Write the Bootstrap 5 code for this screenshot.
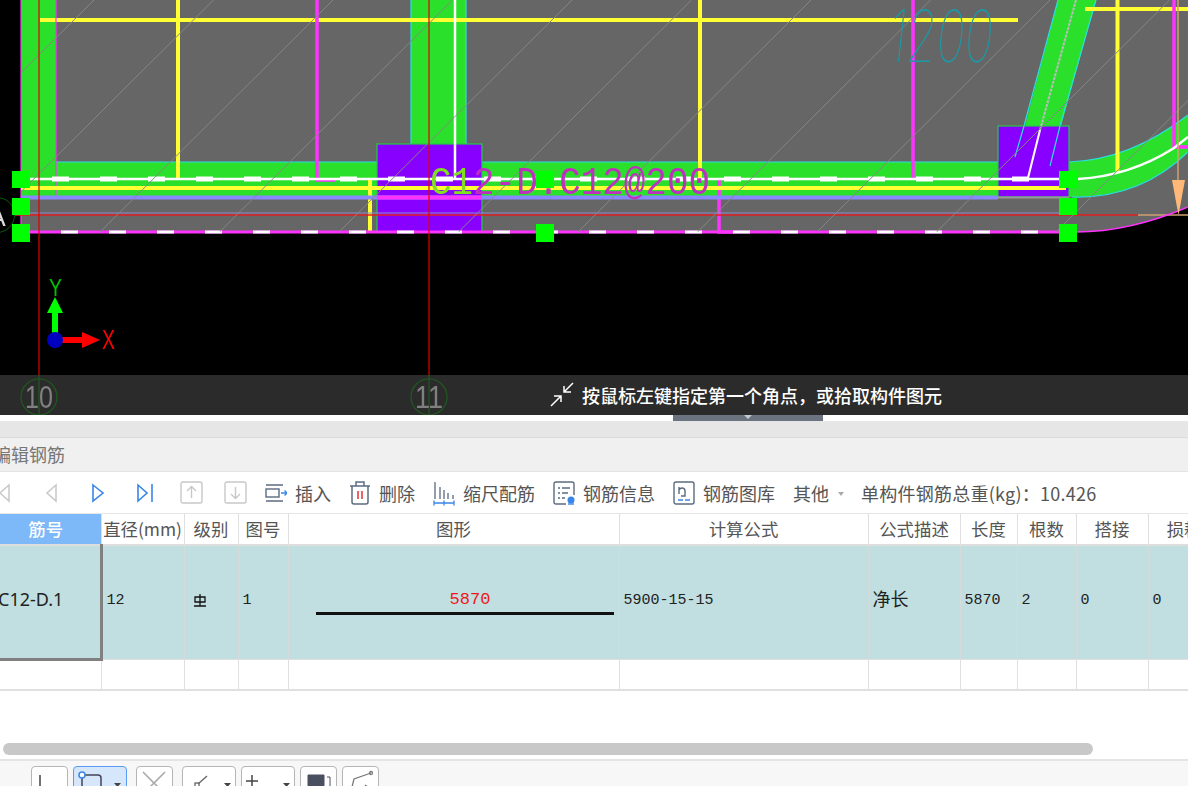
<!DOCTYPE html>
<html lang="zh">
  <head>
    <meta charset="UTF-8" />
    <title>编辑钢筋</title>
    <link href="https://cdn.jsdelivr.net/npm/bootstrap@5.3.0/dist/css/bootstrap.min.css" rel="stylesheet" />
    <style>
      html, body { height: 786px; overflow: hidden; background: #fff; }
      body { font-family: "Noto Sans CJK SC", sans-serif; color: #444; width: 1188px; }

      .cad-view { height: 415px; background: #000; position: relative; overflow: hidden; }
      .cad-view svg { display: block; }
      .cad-draw { filter: blur(0.35px); }
      .cad-hint { position: absolute; left: 550px; top: 375px; height: 40px; color: #fff; font-size: 18px; font-weight: 500; white-space: nowrap; }
      .thin-label { font-family: Inter, "Liberation Sans", sans-serif; font-weight: 100; }

      .split-band { height: 6px; background: #fff; }
      .split-handle { width: 150px; height: 6px; margin-left: 673px; background: #6b7380; }
      .split-caret { width: 0; height: 0; border-left: 4px solid transparent; border-right: 4px solid transparent; border-top: 4px solid #c5c9d0; }
      .gray-band { height: 17px; background: #e6e6e6; border-bottom: 1px solid #dcdcdc; }
      .title-band { height: 34px; background: #f0f0f0; border-bottom: 1px solid #e4e4e4; font-size: 18px; color: #777; white-space: nowrap; }
      .title-band span { margin-left: -7px; }

      .tool-row { height: 42px; margin-left: -20px; font-size: 18px; color: #555; white-space: nowrap; border-bottom: 1px solid #e6e6e6; }
      .nav-cell { width: 47px; }
      .nav-cell-down { width: 41px; }
      .tool-list { gap: 18px; margin-left: 9px; padding-top: 2px; }
      .tool-icon { width: 22px; height: 26px; margin-top: -2px; }
      .tool-caret { width: 0; height: 0; margin-left: 9px; margin-right: -1px; border-left: 3.5px solid transparent; border-right: 3.5px solid transparent; border-top: 4px solid #aaa; }
      .tool-total { letter-spacing: 0.25px; }

      .grid-wrap { height: 229px; overflow: hidden; }
      .rebar-grid { table-layout: fixed; width: 1257px; margin-left: -9px; border-collapse: collapse; }
      .rebar-grid th, .rebar-grid td { padding: 0; border-right: 1px solid #e0e0e0; border-bottom: 1px solid #e0e0e0; }
      .rebar-grid th { height: 31px; font-size: 17.4px; font-weight: 400; text-align: center; color: #555; white-space: nowrap; border-bottom: 2px solid #dedede; }
      .rebar-grid th.head-active { background: #7db8f8; color: #fff; font-weight: 500; }
      .rebar-grid .row-main td { height: 114px; background: #c1dfe0; font-family: "Liberation Mono", "Noto Sans CJK SC", monospace; font-size: 15px; color: #222; padding-left: 4px; padding-bottom: 2px; border-right-color: #d6dcdc; }
      .rebar-grid .row-main td.cell-active { border-right: 3px solid #808080; border-bottom: 3px solid #808080; padding-left: 7px; padding-bottom: 4px; font-family: "Noto Sans", "Noto Sans CJK SC", sans-serif; font-size: 18px; }
      .rebar-grid .row-main td.cell-cn { font-family: "Noto Sans CJK SC", sans-serif; font-size: 18px; padding-bottom: 7px; }
      .rebar-grid .row-empty td { height: 31px; border-bottom: 2px solid #e0e0e0; }
      .shape-num { color: #f01818; font-size: 17px; line-height: 22px; padding-left: 33px; }
      .shape-bar { height: 3px; width: 298px; background: #111; margin-left: 27px; margin-top: 1px; }
      .shape-cell { padding-bottom: 0 !important; }

      .scroll-track { height: 16px; padding-left: 3px; }
      .scroll-thumb { width: 1090px; height: 12px; background: #c8c8c8; border-radius: 6px; }
      .foot-bar { height: 27px; background: #f7f7f7; border-top: 2px solid #e4e4e4; padding-left: 31px; overflow: hidden; gap: 5px; }
      .foot-btn { width: 37px; height: 40px; margin-top: 5px; border: 1.5px solid #b5b5b5; border-radius: 4px; background: #fff; position: relative; flex: none; }
      .foot-btn svg { display: block; }
      .foot-wide { width: 54px; }
      .foot-on { background: #d6e6fb; border-color: #5a9cf5; width: 54px; }
      .foot-gap { margin-left: 4px; }
    </style>
  </head>
  <body>
    <div class="cad-view">
      <svg class="cad-draw" width="1188" height="415" viewBox="0 0 1188 415">
        <path d="M21 0H1188V207Q1130 232 1076 232H21Z" fill="#666" />

        <!-- green beams -->
        <g fill="#2be02b">
          <rect x="21" y="0" width="35" height="197" />
          <rect x="21" y="162" width="1050" height="35" />
          <rect x="411" y="0" width="55" height="165" />
          <path d="M1024 130 1058 0H1096L1060 130Z" />
          <path d="M1069 162Q1130 160 1188 115V152Q1140 199 1069 197Z" />
        </g>
        <g fill="none" stroke="#28e0e0" stroke-width="1.2">
          <path d="M56 162H377M482 162H998M411 0V144M466 0V144" />
          <path d="M1058 0 1024 126M1096 0 1060 126" />
          <path d="M1069 162Q1130 160 1188 115M1072 197Q1140 199 1188 152" />
        </g>

        <!-- yellow -->
        <g stroke="#ffff33" fill="none">
          <path d="M40 20H1018M1085 9H1188" stroke-width="4" />
          <path d="M178 0V178M700 0V178M1117.5 0V172" stroke-width="4" />
        </g>

        <!-- magenta -->
        <g stroke="#ff33ff" fill="none">
          <path d="M21 0V232M56 0V197" stroke-width="1.2" />
          <path d="M317 0V180H335M913 0V178M719 178V232H733M1174 0V147H1188" stroke-width="3.5" />
        </g>

        <!-- columns -->
        <g fill="#8800ff" stroke="#22cc44" stroke-width="1.2">
          <rect x="377" y="144" width="105" height="88" />
          <rect x="998" y="126" width="71" height="71" />
        </g>
        <path d="M1024 126 1015 157M1060 126 1050 166" stroke="#28e0e0" stroke-width="1.2" fill="none" />

        <!-- long bars -->
        <path d="M455 0V180" stroke="#fff" stroke-width="2.5" />
        <path d="M1076 0 1040 130" stroke="#bbb" stroke-width="2" stroke-dasharray="3 1" />
        <path d="M1040 130 1028 178" stroke="#fff" stroke-width="2" />
        <path d="M30 179H1069" stroke="#fff" stroke-width="2.5" />
        <path d="M52 179H1069" stroke="#fff" stroke-width="5" stroke-dasharray="17 31" />
        <path d="M1078 179Q1130 176 1174 148L1188 137" stroke="#fff" stroke-width="2.5" fill="none" />
        <path d="M21 188H1066" stroke="#ffff33" stroke-width="4" />
        <path d="M370 180V232" stroke="#ffff33" stroke-width="4" />
        <path d="M21 197.5H998" stroke="#8888ff" stroke-width="4" />
        <path d="M377 197.5H482" stroke="#ff33ff" stroke-width="4" />
        <path d="M998 197.5H1069" stroke="#999" stroke-width="2" />
        <path d="M21 213H1069" stroke="#8a8ad0" stroke-width="1" />
        <path d="M0 215H1138" stroke="#e02020" stroke-width="1.5" />
        <path d="M1138 215H1188" stroke="#d0a070" stroke-width="1.5" />

        <!-- bottom edge -->
        <path d="M21 232H1076" stroke="#ff33ff" stroke-width="3" />
        <path d="M61 232H1069" stroke="#fff" stroke-width="3" stroke-dasharray="17 31" />
        <path d="M1076 232Q1130 232 1188 207" stroke="#ff33ff" stroke-width="1.5" fill="none" />

        <!-- hatch -->
        <defs>
          <clipPath id="floorClip"><path d="M21 0H1188V207Q1130 232 1076 232H21Z" /></clipPath>
        </defs>
        <path
          d="M94 0 -139 232M213.500 0 -19.500 232M333 0 100 232M452.500 0 219.500 232M572 0 339 232M691.500 0 458.500 232M811 0 578 232M930.500 0 697.500 232M1050 0 817 232M1169.500 0 936.500 232M1289 0 1056 232M1408 0 1175 232"
          stroke="#868686" stroke-width="1" fill="none" clip-path="url(#floorClip)"
        />

        <!-- arrow on the right -->
        <path d="M1178 0V182" stroke="#d0a070" stroke-width="1.5" />
        <path d="M1172 180H1185L1178.500 215Z" fill="#ffb878" />

        <!-- labels -->
        <text x="889" y="62" class="thin-label" font-size="72" font-style="italic" fill="#1a9aa8" textLength="104" lengthAdjust="spacingAndGlyphs">1200</text>
        <text x="430" y="194" font-family="Liberation Mono" font-size="38" textLength="280" lengthAdjust="spacingAndGlyphs"><tspan fill="#80e020">C1</tspan><tspan fill="#c030c0">2-D.C12@200</tspan></text>

        <!-- handles -->
        <g fill="#00ff00">
          <rect x="12" y="171" width="18" height="17" /><rect x="12" y="198" width="18" height="17" /><rect x="12" y="224" width="18" height="18" />
          <rect x="536" y="171" width="18" height="17" /><rect x="536" y="224" width="18" height="18" />
          <rect x="1059" y="171" width="18" height="17" /><rect x="1059" y="198" width="18" height="17" /><rect x="1059" y="224" width="18" height="18" />
        </g>

        <!-- axis A -->
        <circle cx="-3" cy="215" r="17.500" fill="#000" stroke="#0e5a0e" />
        <rect x="12" y="198" width="18" height="17" fill="#00ff00" />
        <rect x="12" y="224" width="18" height="18" fill="#00ff00" />
        <text x="-11" y="226" fill="#ddd" font-family="Liberation Sans" font-size="25">A</text>

        <!-- grid lines -->
        <path d="M39 0V375M429 0V375" stroke="#e00000" stroke-width="1.2" />

        <!-- coordinate marker -->
        <path d="M52 340V313H47L55 297 63 313H58V340Z" fill="#00ff00" />
        <path d="M55 337H82V332L100 340 82 348V343H55Z" fill="#ff0000" />
        <circle cx="55" cy="340" r="8" fill="#0000c0" />
        <text x="49" y="296" fill="#00c000" font-family="Liberation Sans" font-size="24" textLength="13" lengthAdjust="spacingAndGlyphs">Y</text>
        <text x="102" y="349" fill="#ff0000" font-family="Liberation Sans" font-size="27" textLength="13" lengthAdjust="spacingAndGlyphs">X</text>

        <!-- hint bar -->
        <rect x="0" y="375" width="1188" height="40" fill="#2b2b2b" />
        <g fill="none" stroke="#1f5a1f" stroke-width="1.2">
          <circle cx="39" cy="397" r="18" /><circle cx="429" cy="397" r="18" />
          <path d="M39 375V415M429 375V415" />
        </g>
        <g fill="#808080" font-family="Liberation Sans" font-size="31">
          <text x="25" y="408" textLength="28" lengthAdjust="spacingAndGlyphs">10</text>
          <text x="415" y="408" textLength="28" lengthAdjust="spacingAndGlyphs">11</text>
        </g>
      </svg>
      <div class="cad-hint d-flex align-items-center">
        <svg class="me-2" width="24" height="26" viewBox="0 0 24 26" fill="none" stroke="#fff" stroke-width="1.5"><path d="M23 1 14 10M14 4V10H21M1 24 11 14M4 14H11V20" /></svg>
        按鼠标左键指定第一个角点，或拾取构件图元
      </div>
    </div>

    <div class="split-band">
      <div class="split-handle d-flex justify-content-center"><div class="split-caret"></div></div>
    </div>
    <div class="gray-band"></div>
    <div class="title-band d-flex align-items-center"><span>编辑钢筋</span></div>

    <div class="tool-row d-flex align-items-center">
      <div class="nav-cell d-flex justify-content-center"><svg width="12" height="20" viewBox="0 0 12 20" fill="none" stroke="#c8c8c8" stroke-width="1.5"><path d="M11 2 2 10 11 18Z" /></svg></div>
      <div class="nav-cell d-flex justify-content-center"><svg width="12" height="20" viewBox="0 0 12 20" fill="none" stroke="#c8c8c8" stroke-width="1.5"><path d="M11 2 2 10 11 18Z" /></svg></div>
      <div class="nav-cell d-flex justify-content-center"><svg width="12" height="20" viewBox="0 0 12 20" fill="none" stroke="#3a86e8" stroke-width="1.6"><path d="M1 2 11 10 1 18Z" /></svg></div>
      <div class="nav-cell d-flex justify-content-center"><svg width="16" height="20" viewBox="0 0 16 20" fill="none" stroke="#3a86e8" stroke-width="1.6"><path d="M1 2 10 10 1 18ZM15 1V19" /></svg></div>
      <div class="nav-cell d-flex justify-content-center"><svg width="23" height="23" viewBox="0 0 23 23" fill="none" stroke="#c8c8c8" stroke-width="1.4"><rect x="1" y="1" width="21" height="21" rx="2" /><path d="M11.500 17V6M7 10l4.500-4.500L16 10" /></svg></div>
      <div class="nav-cell-down d-flex justify-content-center"><svg width="23" height="23" viewBox="0 0 23 23" fill="none" stroke="#c8c8c8" stroke-width="1.4"><rect x="1" y="1" width="21" height="21" rx="2" /><path d="M11.500 6V17M7 13l4.500 4.500L16 13" /></svg></div>
      <div class="tool-list d-flex align-items-center">
        <div class="d-flex align-items-center gap-2">
          <svg class="tool-icon" viewBox="0 0 22 26" fill="none"><path d="M1 5H18M1 21H18" stroke="#5c6b80" stroke-width="1.4" /><rect x="1" y="9" width="13" height="8" stroke="#5c6b80" stroke-width="1.4" /><path d="M16 13H22M19.500 10.500 22 13l-2.500 2.500" stroke="#3a86e8" stroke-width="1.4" /></svg>
          插入
        </div>
        <div class="d-flex align-items-center gap-2">
          <svg class="tool-icon" viewBox="0 0 22 26" fill="none" stroke="#5c6b80" stroke-width="1.5"><path d="M1 6H21M7 6V2H15V6M3 6V22Q3 24 5 24H17Q19 24 19 22V6" /><path d="M9 11V19M13 11V19" stroke="#e83030" /></svg>
          删除
        </div>
        <div class="d-flex align-items-center gap-2">
          <svg class="tool-icon" viewBox="0 0 22 26" fill="none" stroke="#5c6b80" stroke-width="1.3"><path d="M2 2V19M7 7V19M11 10V19M15 13V19M20 15V19" /><path d="M1 23H21M1 20.500V25.500M11 20.500V25.500M21 20.500V25.500" stroke="#3a86e8" /></svg>
          缩尺配筋
        </div>
        <div class="d-flex align-items-center gap-2">
          <svg class="tool-icon" viewBox="0 0 22 26" fill="none" stroke="#5c6b80" stroke-width="1.4"><path d="M13 24H3Q1 24 1 22V4Q1 2 3 2H19Q21 2 21 4V15" /><path d="M5 8H7M9 8H17M5 13H7M9 13H15M5 18H7M9 18H12" /><circle cx="18" cy="20" r="3.500" fill="#3a86e8" stroke="none" /><path d="M15 24H21" stroke="#3a86e8" /></svg>
          钢筋信息
        </div>
        <div class="d-flex align-items-center gap-2">
          <svg class="tool-icon" viewBox="0 0 22 26" fill="none" stroke="#5c6b80" stroke-width="1.4"><rect x="1" y="2" width="20" height="22" rx="2" /><path d="M6 14V7M6 10Q7 8 9 8 12 8 12 11V16H8" /><path d="M5 20H10M12 20H17" stroke="#3a86e8" /></svg>
          钢筋图库
        </div>
        <div class="d-flex align-items-center">其他<div class="tool-caret"></div></div>
        <div class="tool-total">单构件钢筋总重(kg)：10.426</div>
      </div>
    </div>

    <div class="grid-wrap">
      <table class="rebar-grid">
        <colgroup>
          <col width="110" /><col width="83" /><col width="54" /><col width="50" /><col width="331" /><col width="249" /><col width="92" /><col width="57" /><col width="59" /><col width="72" /><col width="100" />
        </colgroup>
        <thead>
          <tr>
            <th class="head-active">筋号</th><th>直径(mm)</th><th>级别</th><th>图号</th><th>图形</th><th>计算公式</th><th>公式描述</th><th>长度</th><th>根数</th><th>搭接</th><th>损耗(%)</th>
          </tr>
        </thead>
        <tbody>
          <tr class="row-main">
            <td class="cell-active">C12-D.1</td>
            <td>12</td>
            <td class="ps-2"><svg width="14" height="13" viewBox="0 0 14 13" fill="none" stroke="#111" stroke-width="1.3"><path d="M7 0V12M1 12H13" /><path d="M2 3H12V8H2Z" /></svg></td>
            <td>1</td>
            <td class="shape-cell px-0">
              <div class="shape-num text-center">5870</div>
              <div class="shape-bar"></div>
            </td>
            <td>5900-15-15</td>
            <td class="cell-cn">净长</td>
            <td>5870</td>
            <td>2</td>
            <td>0</td>
            <td>0</td>
          </tr>
          <tr class="row-empty">
            <td></td><td></td><td></td><td></td><td></td><td></td><td></td><td></td><td></td><td></td><td></td>
          </tr>
        </tbody>
      </table>
    </div>

    <div class="scroll-track"><div class="scroll-thumb"></div></div>

    <div class="foot-bar d-flex">
      <div class="foot-btn"><svg width="34" height="20" viewBox="0 0 34 20" fill="none" stroke="#444" stroke-width="1.5"><path d="M8 8V20H20" /></svg></div>
      <div class="foot-btn foot-on"><svg width="51" height="20" viewBox="0 0 51 20" fill="none" stroke="#445" stroke-width="1.5"><path d="M8 8V20M8 8H24Q27 8 27 11V20" /><circle cx="8" cy="8" r="3" stroke="#3a86e8" fill="#fff" /><path d="M40 16H47L43.500 20Z" fill="#444" stroke="none" /></svg></div>
      <div class="foot-btn foot-gap"><svg width="34" height="20" viewBox="0 0 34 20" fill="none" stroke="#aaa" stroke-width="1.6"><path d="M6 5 17 16 28 5M17 16 12 21M17 16 22 21" /></svg></div>
      <div class="foot-btn foot-wide foot-gap"><svg width="51" height="20" viewBox="0 0 51 20" fill="none" stroke="#666" stroke-width="1.3"><path d="M24 9 15 17" /><rect x="12" y="16" width="4" height="4" /><path d="M41 16H48L44.500 20Z" fill="#444" stroke="none" /></svg></div>
      <div class="foot-btn foot-wide"><svg width="51" height="20" viewBox="0 0 51 20" fill="none" stroke="#444" stroke-width="1.5"><path d="M4 14H16M10 8V20" /><path d="M41 16H48L44.500 20Z" fill="#444" stroke="none" /></svg></div>
      <div class="foot-btn"><svg width="34" height="20" viewBox="0 0 34 20" fill="#4a5060" stroke="#4a5060"><path d="M7 8H23V20H7Z" /><path d="M26 10H29V20" fill="none" /></svg></div>
      <div class="foot-btn"><svg width="34" height="20" viewBox="0 0 34 20" fill="none" stroke="#777" stroke-width="1.3"><path d="M9 20 11 12 28 6" /><circle cx="28" cy="6" r="1.500" /><path d="M22 18 25 20" /></svg></div>
    </div>

    <script src="https://cdn.jsdelivr.net/npm/bootstrap@5.3.0/dist/js/bootstrap.bundle.min.js"></script>
  </body>
</html>
